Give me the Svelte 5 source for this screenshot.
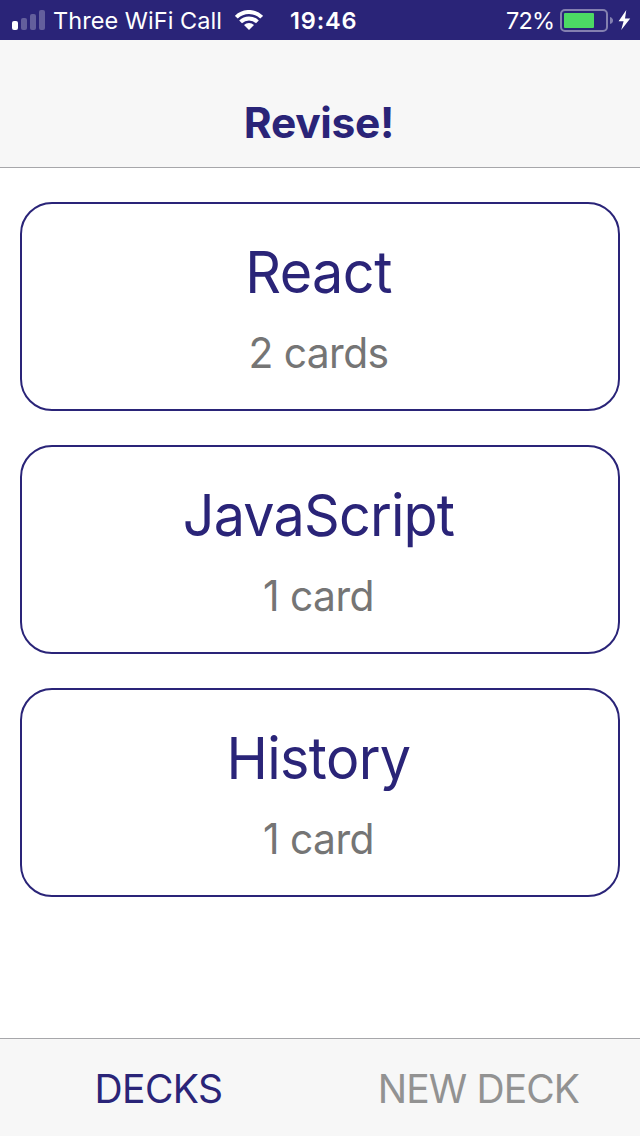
<script>
  const decks = [
    { title: 'React', count: 2, tracking: -0.55 },
    { title: 'JavaScript', count: 1, tracking: -0.85 },
    { title: 'History', count: 1, tracking: -0.65 },
  ];
  const signal = [
    { x: 0, y: 11, h: 9, on: true },
    { x: 9, y: 8, h: 12, on: false },
    { x: 18, y: 4, h: 16, on: false },
    { x: 27, y: 0, h: 20, on: false },
  ];
</script>

<div class="screen">
  <div class="status">
    <svg class="signal" width="33" height="20" viewBox="0 0 33 20">
      {#each signal as bar}
        <rect x={bar.x} y={bar.y} width="6" height={bar.h} rx="2" fill="#fff" fill-opacity={bar.on ? 1 : 0.27} />
      {/each}
    </svg>
    <span class="carrier">Three WiFi Call</span>
    <svg class="wifi" width="28" height="20" viewBox="0 0 28 20">
      <g fill="none" stroke="#fff" stroke-width="4">
        <path d="M1.3 7.2A18 18 0 0 1 26.7 7.2" />
        <path d="M5.6 11.9A12 12 0 0 1 22.4 11.9" />
      </g>
      <path fill="#fff" d="M14 20L9 15.1A7.2 7.2 0 0 1 19 15.1Z" />
    </svg>
    <span class="time">19:46</span>
    <span class="percent">72%</span>
    <svg class="battery" width="72" height="24" viewBox="0 0 72 24">
      <rect x="1" y="1" width="46" height="21" rx="4" fill="none" stroke="#8480b0" stroke-width="2" />
      <rect x="4" y="4" width="30" height="15" rx="1" fill="#4cd964" />
      <path d="M50 8Q53 9 53 11.5T50 15Z" fill="#8480b0" />
      <path d="M66.3 1L58.6 12.2H63.6L61.2 21L70.2 9.4H65Z" fill="#fff" />
    </svg>
  </div>

  <header><h1>Revise!</h1></header>

  <main>
    {#each decks as deck}
      <section class="card">
        <h2 style:letter-spacing="{deck.tracking}px">{deck.title}</h2>
        <p>{deck.count} {deck.count === 1 ? 'card' : 'cards'}</p>
      </section>
    {/each}
  </main>

  <nav>
    <span class="tab active">DECKS</span>
    <span class="tab">NEW DECK</span>
  </nav>
</div>

<style>
  .screen {
    display: flex;
    flex-direction: column;
    width: 640px;
    height: 1136px;
    background: #fff;
    color: #2a2478;
    font-family: Inter, "Liberation Sans", sans-serif;
    overflow: hidden;
  }
  .status {
    display: flex;
    flex: none;
    align-items: flex-start;
    height: 40px;
    box-sizing: border-box;
    padding-left: 12px;
    background: #2a2478;
    color: #fff;
    font-size: 23.5px;
    line-height: 41px;
    white-space: nowrap;
  }
  svg { display: block; flex: none; }
  .signal { margin-top: 10px; }
  .carrier { width: 182px; padding-left: 8px; box-sizing: border-box; letter-spacing: 0.05px; }
  .wifi { margin: 10px 0 0 8px; }
  .time { width: 214px; margin-left: 27px; font-weight: 600; letter-spacing: 0.85px; }
  .percent { width: 49px; margin-left: 2px; letter-spacing: -0.8px; }
  .battery { margin: 9px 0 0 5px; }
  header {
    flex: none;
    height: 128px;
    box-sizing: border-box;
    padding: 57px 2px 0 0;
    border-bottom: 1px solid #a7a7aa;
    background: #f7f7f7;
    text-align: center;
  }
  h1 {
    margin: 0;
    font-size: 42.5px;
    line-height: 52px;
    font-weight: 700;
    letter-spacing: -0.3px;
  }
  main {
    display: flex;
    flex: 1;
    flex-direction: column;
    gap: 34px;
    padding: 34px 20px 0;
  }
  .card {
    flex: none;
    height: 209px;
    box-sizing: border-box;
    border: 2px solid #2a2478;
    border-radius: 32px;
    padding: 32px 3px 0 0;
    text-align: center;
  }
  h2 {
    margin: 0;
    font-size: 58px;
    line-height: 72px;
    font-weight: 400;
    transform: scaleX(0.96);
  }
  p {
    margin: 19px 0 0;
    color: #757575;
    font-size: 42.5px;
    line-height: 52px;
    letter-spacing: -0.6px;
    transform: scaleX(0.96);
  }
  nav {
    display: flex;
    flex: none;
    height: 98px;
    box-sizing: border-box;
    border-top: 1px solid #a7a7aa;
    background: #f7f7f7;
  }
  .tab {
    flex: 1;
    padding-right: 3px;
    color: #929292;
    font-size: 39px;
    line-height: 99px;
    letter-spacing: -0.9px;
    text-align: center;
  }
  .active { color: #2a2478; letter-spacing: -0.6px; }
</style>
